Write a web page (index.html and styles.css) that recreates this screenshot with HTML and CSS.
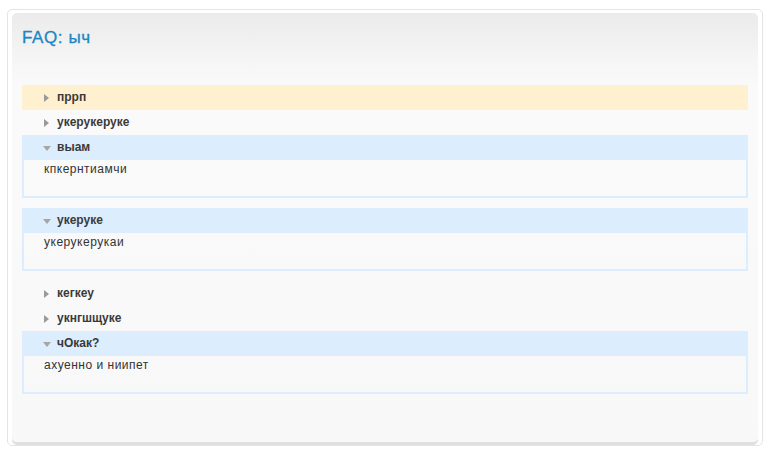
FILE: index.html
```html
<!DOCTYPE html>
<html>
<head>
<meta charset="utf-8">
<link rel="stylesheet" href="styles.css">
</head>
<body>
<div class="frame">
  <div class="panel">
    <h1 class="title">FAQ: ыч</h1>
    <div class="faq">
      <div class="group">
        <div class="item hl"><div class="head"><span class="arr right"></span>пррп</div></div>
        <div class="item"><div class="head"><span class="arr right"></span>укерукеруке</div></div>
        <div class="item open"><div class="head"><span class="arr down"></span>выам</div><div class="body">кпкернтиамчи</div></div>
      </div>
      <div class="group">
        <div class="item open"><div class="head"><span class="arr down"></span>укеруке</div><div class="body">укерукерукаи</div></div>
      </div>
      <div class="group">
        <div class="item"><div class="head"><span class="arr right"></span>кегкеу</div></div>
        <div class="item"><div class="head"><span class="arr right"></span>укнгшщуке</div></div>
        <div class="item open"><div class="head"><span class="arr down"></span>чОкак?</div><div class="body">ахуенно и ниипет</div></div>
      </div>
    </div>
  </div>
</div>
</body>
</html>
```
FILE: styles.css
```css
html, body { margin: 0; padding: 0; background: #fff; }
body { font-family: "Liberation Sans", Arial, sans-serif; }
.frame {
  margin: 9px 8px 0 7px;
  border: 1px solid #e4e4e4;
  border-radius: 5px;
  padding: 3px 4px 3px 4px;
  background: #fff;
}
.panel {
  border-radius: 5px;
  background: linear-gradient(#ebebeb 0px, #f6f6f6 50px, #fafafa 75px, #f8f8f8 100%);
  box-shadow: 0 3px 0 #e0e0e0;
  padding: 15px 10px 38px 10px;
}
.title {
  margin: 0;
  font-weight: normal;
  font-size: 17px;
  line-height: 20px;
  letter-spacing: 0.6px;
  color: #1a86c3;
  -webkit-text-stroke: 0.3px #1a86c3;
  height: 57px;
}
.group { margin-bottom: 10px; }
.head {
  height: 25px;
  line-height: 25px;
  padding-left: 22px;
  font-size: 12px;
  font-weight: bold;
  color: #3a3a3a;
  display: flex;
  align-items: center;
}
.hl .head { background: #fff0d0; }
.open .head { background: #dcedfd; }
.arr { width: 13px; height: 25px; display: flex; align-items: center; }
.arr.right::before {
  content: "";
  width: 0; height: 0;
  border-top: 4px solid transparent;
  border-bottom: 4px solid transparent;
  border-left: 5px solid #9a9a9a;
}
.arr.down::before {
  content: "";
  width: 0; height: 0;
  border-left: 4px solid transparent;
  border-right: 4px solid transparent;
  border-top: 5px solid #a5a5a5;
  margin-left: -1px;
  margin-top: 2px;
}
.body {
  border: 2px solid #dcedfd;
  border-top: none;
  padding: 1px 20px 19px 20px;
  font-size: 12px;
  line-height: 16px;
  letter-spacing: 0.5px;
  color: #333;
}
```
